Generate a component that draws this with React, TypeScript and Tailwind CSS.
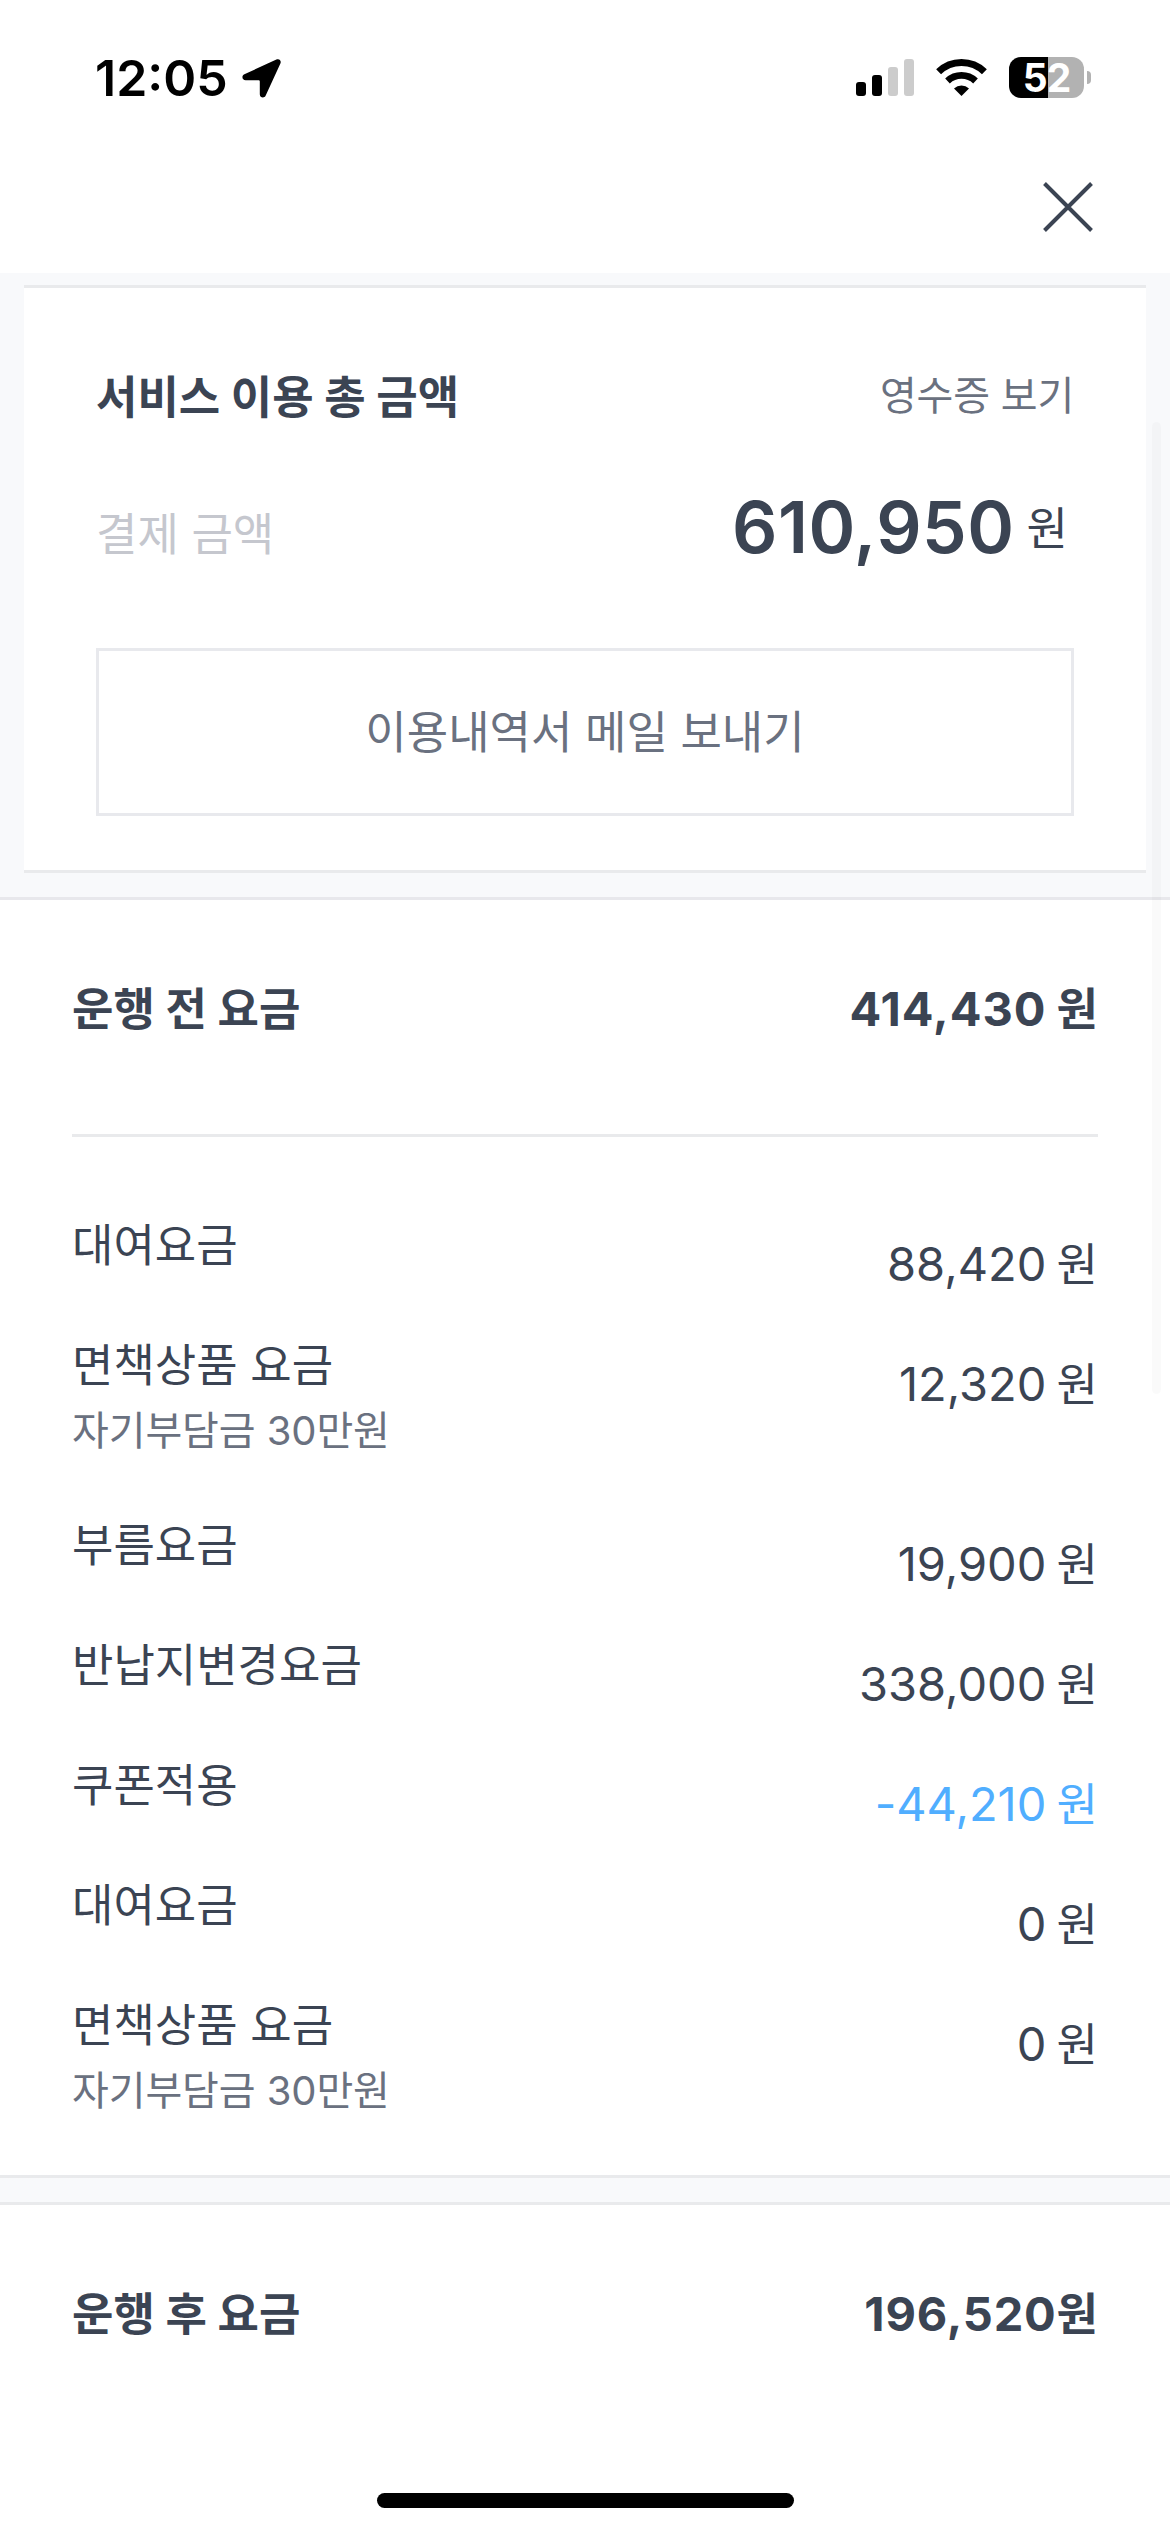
import clsx from 'clsx';

type Fee = {
  label: string;
  note?: string;
  amount: string;
  discount?: boolean;
};

const fees: Fee[] = [
  { label: '대여요금', amount: '88,420' },
  { label: '면책상품 요금', note: '자기부담금 30만원', amount: '12,320' },
  { label: '부름요금', amount: '19,900' },
  { label: '반납지변경요금', amount: '338,000' },
  { label: '쿠폰적용', amount: '-44,210', discount: true },
  { label: '대여요금', amount: '0' },
  { label: '면책상품 요금', note: '자기부담금 30만원', amount: '0' },
];

function StatusBar() {
  return (
    <div className="flex h-[156px] items-start justify-between pl-[95px] pr-[79px] text-black">
      <div className="flex items-center pt-[48px]">
        <span className="w-[147px] text-[50px] font-semibold leading-[60px]">12:05</span>
        <svg className="h-[39px] w-[39px]" viewBox="0 0 39 39" fill="currentColor">
          <path d="M34.4.5C37.300-.7 39.600 1.600 38.400 4.500L23.700 36.600C22.300 39.800 17.800 38.900 17.800 35.300V22.600C17.800 21.700 17.300 21.200 16.400 21.200H3.700C.1 21.200-.8 16.700 2.400 15.300Z" />
        </svg>
      </div>
      <div className="flex items-center pt-[57px]">
        <div className="flex h-[37px] items-end gap-1.5">
          <div className="h-3.5 w-2.5 rounded-[3px] bg-black" />
          <div className="h-[21px] w-2.5 rounded-[3px] bg-black" />
          <div className="h-[29px] w-2.5 rounded-[3px] bg-[#cccccc]" />
          <div className="h-[37px] w-2.5 rounded-[3px] bg-[#cccccc]" />
        </div>
        <svg className="ml-[22px] h-[37px] w-[51px]" viewBox="0 0 51 37" fill="none" stroke="currentColor">
          <path d="M2.600 12.800A33 33 0 0 1 48.400 12.800" strokeWidth="7" />
          <path d="M11.500 22A20.500 20.500 0 0 1 39.500 22" strokeWidth="6.800" />
          <path d="M18 29.400A11.500 11.500 0 0 1 33 29.400L25.500 37Z" fill="currentColor" stroke="none" />
        </svg>
        <div className="ml-[22px] flex h-[41px] w-[75px] items-center justify-center rounded-[12px] bg-[linear-gradient(90deg,#000_52%,#b2b2b2_52%)] text-[39px] font-bold leading-none tracking-[-1px] text-white">
          52
        </div>
        <div className="ml-[3px] h-[13px] w-1 rounded-r-full bg-[#b2b2b2]" />
      </div>
    </div>
  );
}

function FeeRow({ label, note, amount, discount }: Fee) {
  return (
    <li className={clsx('flex items-start justify-between leading-[60px]', note ? 'h-[180px]' : 'h-[120px]')}>
      <div className="pt-px">
        <p className="text-[45px]">{label}</p>
        {note && <p className="mt-[5px] text-[40px] tracking-[-0.1px] text-[#6a7180]">{note}</p>}
      </div>
      <p className={clsx('mt-[19px] text-[47px] [word-spacing:-3px]', discount && 'text-[#50aeff]')}>
        {amount} <span className="text-[45px]">원</span>
      </p>
    </li>
  );
}

export default function App() {
  return (
    <div className="relative h-[2532px] w-[1170px] overflow-hidden bg-white font-['Inter','Noto_Sans_CJK_KR',sans-serif] text-[#3b4453]">
      <StatusBar />

      <header className="flex h-[117px] items-start justify-end pr-[77px] pt-[26px]">
        <button aria-label="닫기">
          <svg className="h-[50px] w-[50px]" viewBox="0 0 50 50" stroke="currentColor" strokeWidth="4">
            <path d="M1.500 1.500L48.500 48.500M48.500 1.500L1.500 48.500" />
          </svg>
        </button>
      </header>

      <main>
        <section className="bg-[#f8f9fb] px-6 pb-6 pt-3">
          <div className="h-[588px] border-y-3 border-[#e9eaec] bg-white px-[72px] pt-20 leading-[60px]">
            <div className="flex h-[60px] items-end justify-between">
              <h2 className="text-[45px] font-bold">서비스 이용 총 금액</h2>
              <button className="pb-0.5 text-[40px] tracking-[-0.2px] text-[#6a7180]">영수증 보기</button>
            </div>
            <div className="flex h-[220px] items-start justify-between pt-[69px]">
              <span className="pt-2 text-[45px] text-[#c5c7ce]">결제 금액</span>
              <p className="flex pr-1.5">
                <strong className="text-[71px] font-semibold tracking-[0.5px]">610,950</strong>
                <span className="ml-3 pt-0.5 text-[45px]">원</span>
              </p>
            </div>
            <button className="block h-[168px] w-full border-3 border-[#e8e9ed] pt-0.5 text-[45px] text-[#6a7180]">
              이용내역서 메일 보내기
            </button>
          </div>
        </section>

        <section className="border-t-3 border-[#e8e8ec] px-[72px] pt-20">
          <div className="flex h-[154px] justify-between font-bold leading-[60px]">
            <h2 className="text-[45px]">운행 전 요금</h2>
            <p className="-mt-px text-[47px] tracking-[1px] [word-spacing:-2px]">
              414,430 <span className="text-[45px] tracking-normal">원</span>
            </p>
          </div>
          <ul className="border-t-3 border-[#e9eaec] pt-[78px]">
            {fees.map((fee, i) => (
              <FeeRow key={i} {...fee} />
            ))}
          </ul>
        </section>

        <div className="h-[30px] border-y-3 border-[#e9eaec] bg-[#f8f9fb]" />

        <section className="flex justify-between px-[72px] pt-20 font-bold leading-[60px]">
          <h2 className="text-[45px]">운행 후 요금</h2>
          <p className="-mt-px text-[47px] tracking-[0.8px]">
            196,520<span className="text-[45px] tracking-normal">원</span>
          </p>
        </section>
      </main>

      {/* scroll thumb */}
      <div className="absolute right-[9px] top-[422px] h-[972px] w-[9px] rounded-full bg-black/[0.02]" />
      {/* home indicator */}
      <div className="absolute bottom-6 left-[377px] h-[15px] w-[417px] rounded-full bg-black" />
    </div>
  );
}
